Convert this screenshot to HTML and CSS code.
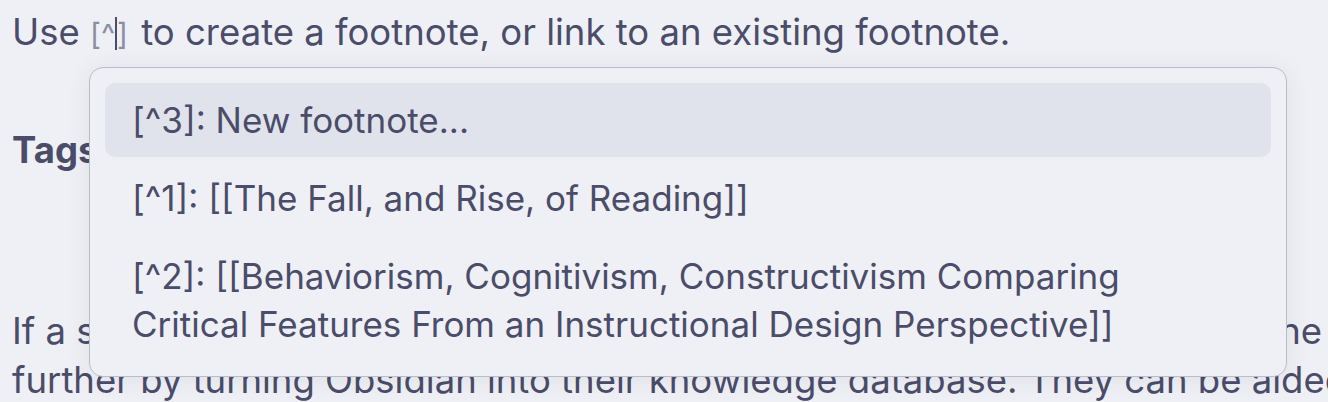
FILE: index.html
```html
<!DOCTYPE html>
<html lang="en">
<head>
<meta charset="UTF-8">
<meta name="viewport" content="width=device-width, initial-scale=1.0">
<title>Footnote suggestions</title>
<link rel="stylesheet" href="styles.css">
</head>
<body>

<div class="editor">
  <p class="line first">Use <span class="mark">[^<span class="caret"></span>]</span> to create a footnote, or link to an existing footnote.</p>

  <p class="line tags">Tags</p>

  <p class="line">If a student wants to take their notes a step further, they can go and try. The</p>
  <p class="line">further by turning Obsidian into their knowledge database. They can be aided by plugins and templates.</p>

  <!-- footnote suggestion popup -->
  <div class="suggest">
    <div class="suggest-item is-selected">[^3]: New footnote...</div>
    <div class="suggest-item">[^1]: [[The Fall, and Rise, of Reading]]</div>
    <div class="suggest-item">[^2]: [[Behaviorism, Cognitivism, Constructivism Comparing<br>Critical Features From an Instructional Design Perspective]]</div>
  </div>
</div>

</body>
</html>
```

FILE: styles.css
```css
body {
    margin: 0;
    padding: 0;
    background-color: #eff0f5;
    color: #4a4c69;
    font-family: Inter, "Noto Sans", sans-serif;
    font-size: 36.5px;
    line-height: 49px;
    overflow: hidden;
    height: 402px;
}

.editor {
    position: relative;
    padding: 8px 0 0 12px;
}

.line {
    margin: 0;
    white-space: nowrap;
}

.first {
    margin-bottom: 67px;
}

.tags {
    font-weight: 700;
    margin-bottom: 132px;
}

.mark {
    color: #8b8da3;
    font-size: 30px;
    margin-right: 3px;
}

.caret {
    display: inline-block;
    width: 2px;
    height: 33px;
    background-color: #4a4c69;
    vertical-align: -5px;
}

/* popup */
.suggest {
    position: absolute;
    left: 89px;
    top: 67px;
    width: 1166px;
    padding: 15px;
    background-color: #eff0f5;
    border: 1px solid #b9bdcb;
    border-radius: 14px;
    box-shadow: 0 2px 24px rgba(40, 45, 80, 0.08);
    display: flex;
    flex-direction: column;
    gap: 4px;
    font-size: 35px;
    line-height: 48px;
}

.suggest-item {
    padding: 13px 27px;
    border-radius: 10px;
    white-space: nowrap;
}

.suggest-item.is-selected {
    background-color: #e1e3ec;
}
```
